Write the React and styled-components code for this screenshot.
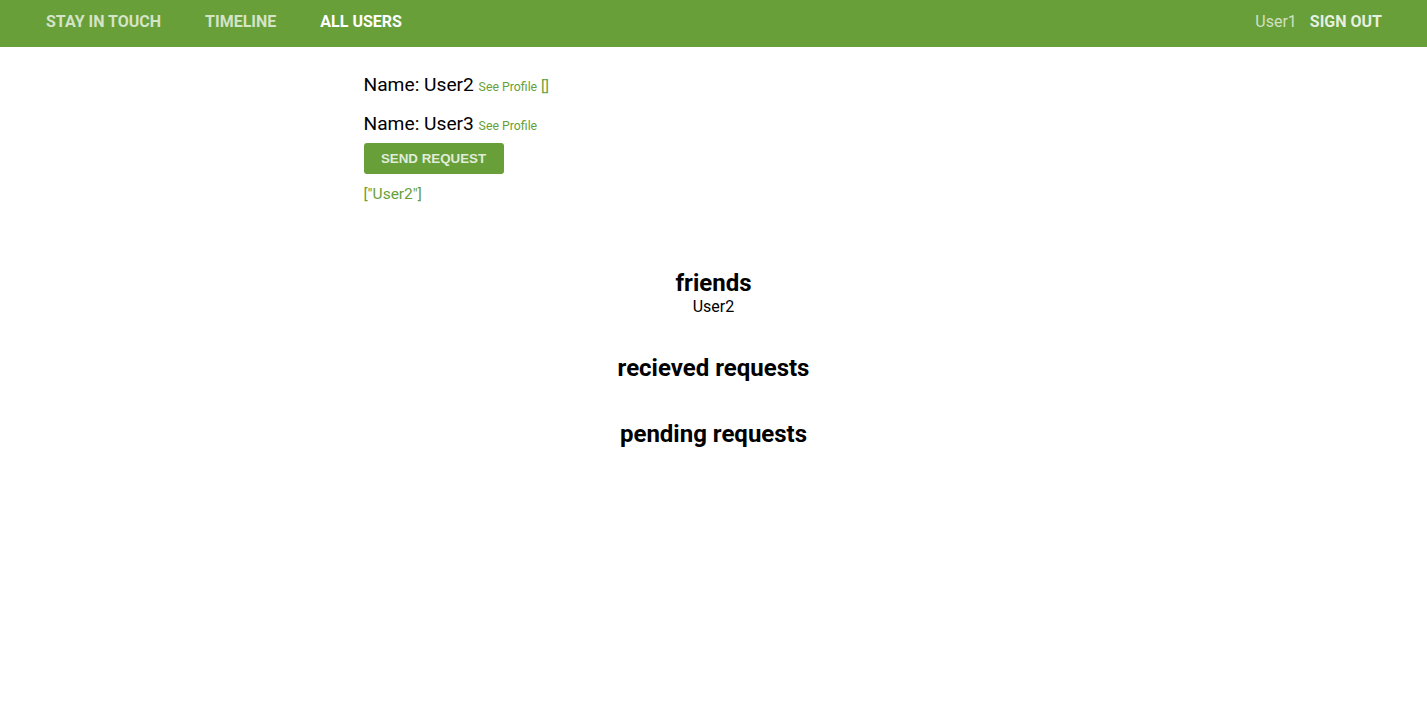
import React from 'react'
import styled, { createGlobalStyle } from 'styled-components'

const GREEN = '#689f38'

const GlobalStyle = createGlobalStyle`
  body {
    margin: 0;
    font-family: Roboto, "Liberation Sans", sans-serif;
    background: #fff;
    color: #000;
  }
`

export const NavBar = styled.nav`
  display: flex;
  align-items: center;
  justify-content: space-between;
  height: 47px;
  box-sizing: border-box;
  padding: 0 23px 4px 24px;
  background: ${GREEN};
`
export const NavGroup = styled.div`
  display: flex;
  align-items: center;
`
export const NavLink = styled.a`
  font-size: 16px;
  font-weight: 700;
  text-transform: uppercase;
  color: ${props => (props.active ? '#ffffff' : 'rgba(255,255,255,0.72)')};
  padding: 0 22px;
  text-decoration: none;
  cursor: pointer;
`
export const NavUser = styled.span`
  font-size: 16px;
  color: rgba(255,255,255,0.7);
  margin-right: 13px;
`
export const SignOut = styled.a`
  font-size: 16px;
  font-weight: 700;
  color: rgba(255,255,255,0.85);
  padding-right: 22px;
  cursor: pointer;
`

export const Container = styled.main`
  width: 700px;
  margin: 0 auto;
  padding-top: 26px;
`
export const UserRow = styled.div`
  font-size: 19.2px;
  line-height: 24px;
  margin-bottom: ${props => props.mb || '13px'};
`
export const ProfileLink = styled.a`
  font-size: 12.3px;
  color: ${GREEN};
  cursor: pointer;
`
export const Brackets = styled.span`
  font-size: 15px;
  color: ${GREEN};
  margin-left: -1px;
`
export const SendButton = styled.button`
  display: block;
  width: 140px;
  height: 31px;
  padding: 0;
  background: ${GREEN};
  color: rgba(255,255,255,0.82);
  border: none;
  border-radius: 3px;
  font-family: "Liberation Sans", Arial, sans-serif;
  font-size: 13.33px;
  font-weight: 700;
  text-transform: uppercase;
  cursor: pointer;
`
export const SentList = styled.div`
  font-size: 15.5px;
  line-height: 19px;
  color: ${GREEN};
  margin-top: 11px;
`
export const Section = styled.section`
  text-align: center;
  margin-top: ${props => props.mt};
`
export const SectionTitle = styled.h2`
  font-size: 24px;
  font-weight: 700;
  line-height: 28px;
  margin: 0;
`
export const SectionItem = styled.div`
  font-size: 16px;
  line-height: 19px;
`

export default function App() {
  return (
    <>
      <GlobalStyle />
      <NavBar>
        <NavGroup>
          <NavLink>Stay in touch</NavLink>
          <NavLink>Timeline</NavLink>
          <NavLink active>All users</NavLink>
        </NavGroup>
        <NavGroup>
          <NavUser>User1</NavUser>
          <SignOut>SIGN OUT</SignOut>
        </NavGroup>
      </NavBar>
      <Container>
        <UserRow>
          Name: User2 <ProfileLink>See Profile</ProfileLink> <Brackets>[]</Brackets>
        </UserRow>
        <UserRow mb="5px">
          Name: User3 <ProfileLink>See Profile</ProfileLink>
        </UserRow>
        <SendButton>Send request</SendButton>
        <SentList>["User2"]</SentList>
        <Section mt="65px">
          <SectionTitle>friends</SectionTitle>
          <SectionItem>User2</SectionItem>
        </Section>
        <Section mt="38px">
          <SectionTitle>recieved requests</SectionTitle>
        </Section>
        <Section mt="38px">
          <SectionTitle>pending requests</SectionTitle>
        </Section>
      </Container>
    </>
  )
}
